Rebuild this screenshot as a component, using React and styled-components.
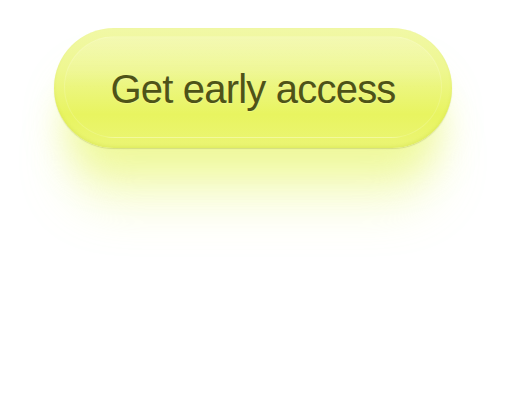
import styled, { createGlobalStyle } from 'styled-components';

const GlobalStyle = createGlobalStyle`
  html, body {
    margin: 0;
    padding: 0;
    background: #ffffff;
  }
  body {
    font-family: "Liberation Sans", Arial, sans-serif;
  }
`;

const Page = styled.div`
  width: 506px;
  height: 408px;
  padding: 28px 0 0 54px;
  box-sizing: border-box;
  overflow: hidden;
`;

const GlowButton = styled.button`
  position: relative;
  width: 398px;
  height: 120px;
  border: none;
  border-radius: 60px;
  padding: 0;
  display: flex;
  align-items: center;
  justify-content: center;
  font-family: "Liberation Sans", Arial, sans-serif;
  font-size: 40px;
  font-weight: 400;
  letter-spacing: -0.8px;
  color: #4e5318;
  cursor: pointer;
  background: linear-gradient(180deg, #f1f8a6 0%, #eef790 35%, #e8f460 72%, #ebf575 100%);
  box-shadow:
    0 1px 1px rgba(150, 160, 60, 0.3),
    0 34px 36px -10px rgba(232, 245, 110, 0.55),
    0 70px 50px -16px rgba(232, 245, 110, 0.35),
    inset 0 -2px 3px rgba(200, 215, 60, 0.3);

  &::before {
    content: '';
    position: absolute;
    inset: 8px 10px 10px 10px;
    border-radius: 52px;
    border: 1px solid rgba(255, 255, 235, 0.18);
    background: linear-gradient(180deg, rgba(255, 255, 230, 0.25) 0%, rgba(255, 255, 230, 0) 50%);
    pointer-events: none;
  }
`;

const Label = styled.span`
  position: relative;
  top: 1px;
  text-shadow: 0 1px 1px rgba(255, 255, 200, 0.3);
`;

export default function App() {
  return (
    <>
      <GlobalStyle />
      <Page>
        <GlowButton>
          <Label>Get early access</Label>
        </GlowButton>
      </Page>
    </>
  );
}
